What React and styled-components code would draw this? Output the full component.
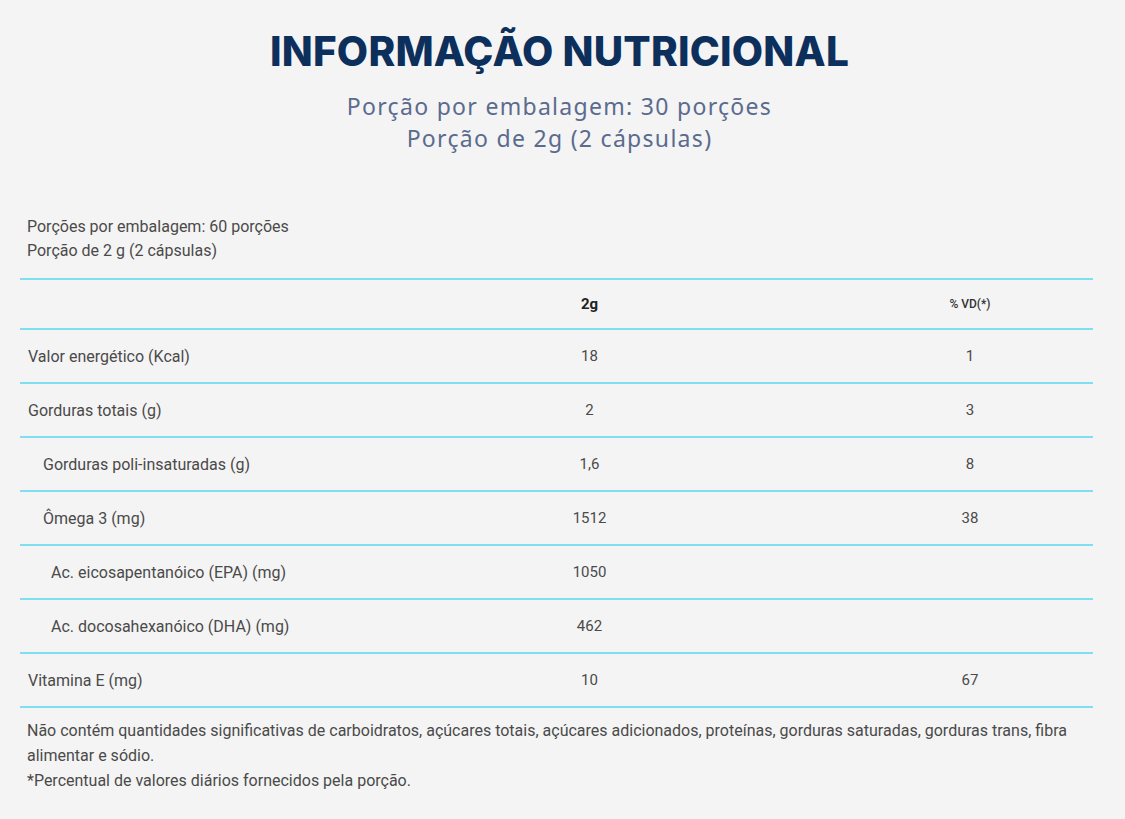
import { Fragment } from 'react';
import styled, { createGlobalStyle } from 'styled-components';

const GlobalStyle = createGlobalStyle`
  html, body {
    margin: 0;
    padding: 0;
    background: #f4f4f4;
  }
`;

const Page = styled.div`
  width: 1125px;
  min-height: 819px;
  background: #f4f4f4;
  font-family: Roboto, 'Liberation Sans', sans-serif;
  color: #4a4a4a;
  box-sizing: border-box;
  padding: 24px 32px 0 20px;
`;

const Header = styled.header`
  display: flex;
  flex-direction: column;
  align-items: center;
  padding-left: 6px;
`;

const Title = styled.h1`
  margin: 0 0 10px;
  font-family: Inter, 'Noto Sans', sans-serif;
  font-weight: 800;
  font-size: 40.5px;
  line-height: 56px;
  letter-spacing: 0.2px;
  color: #0d2f5c;
`;

const Subtitle = styled.div`
  font-family: 'Noto Sans', Inter, sans-serif;
  font-size: 23px;
  line-height: 32px;
  letter-spacing: 1.3px;
  color: #5a6b8e;
  text-align: center;
`;

const Serving = styled.div`
  margin-top: 61px;
  padding-left: 7px;
  font-size: 16px;
  line-height: 24px;
  color: #4a4a4a;
`;

const Table = styled.div`
  margin-top: 15px;
  display: grid;
  grid-template-columns: 312px 515px 1fr;
  border-top: 2px solid #7fdff0;
`;

const Cell = styled.div`
  height: ${(p) => (p.$head ? 48 : 52)}px;
  display: flex;
  align-items: center;
  justify-content: ${(p) => (p.$label ? 'flex-start' : 'center')};
  padding-left: ${(p) => (p.$label ? 8 + (p.$indent || 0) : 0)}px;
  border-bottom: 2px solid #7fdff0;
  font-size: ${(p) => (p.$small ? 12 : p.$label ? 16 : 15)}px;
  font-weight: ${(p) => (p.$bold ? 700 : p.$small ? 500 : 400)};
  color: ${(p) => (p.$bold ? '#222222' : p.$small ? '#333333' : '#4a4a4a')};
  white-space: nowrap;
`;

const Notes = styled.div`
  padding: 10px 0 0 7px;
  font-size: 16px;
  line-height: 25px;
  color: #4a4a4a;
`;

const rows = [
  { label: 'Valor energético (Kcal)', qty: '18', vd: '1', indent: 0 },
  { label: 'Gorduras totais (g)', qty: '2', vd: '3', indent: 0 },
  { label: 'Gorduras poli-insaturadas (g)', qty: '1,6', vd: '8', indent: 15 },
  { label: 'Ômega 3 (mg)', qty: '1512', vd: '38', indent: 15 },
  { label: 'Ac. eicosapentanóico (EPA) (mg)', qty: '1050', vd: '', indent: 23 },
  { label: 'Ac. docosahexanóico (DHA) (mg)', qty: '462', vd: '', indent: 23 },
  { label: 'Vitamina E (mg)', qty: '10', vd: '67', indent: 0 },
];

export default function App() {
  return (
    <Page>
      <GlobalStyle />
      <Header>
        <Title>INFORMAÇÃO NUTRICIONAL</Title>
        <Subtitle>
          Porção por embalagem: 30 porções
          <br />
          Porção de 2g (2 cápsulas)
        </Subtitle>
      </Header>

      <Serving>
        Porções por embalagem: 60 porções
        <br />
        Porção de 2 g (2 cápsulas)
      </Serving>

      <Table>
        <Cell $head $label />
        <Cell $head $bold>2g</Cell>
        <Cell $head $small>% VD(*)</Cell>
        {rows.map((r) => (
          <Fragment key={r.label}>
            <Cell $label $indent={r.indent}>{r.label}</Cell>
            <Cell>{r.qty}</Cell>
            <Cell>{r.vd}</Cell>
          </Fragment>
        ))}
      </Table>

      <Notes>
        Não contém quantidades significativas de carboidratos, açúcares totais, açúcares adicionados, proteínas, gorduras saturadas, gorduras trans, fibra alimentar e sódio.
        <br />
        *Percentual de valores diários fornecidos pela porção.
      </Notes>
    </Page>
  );
}
